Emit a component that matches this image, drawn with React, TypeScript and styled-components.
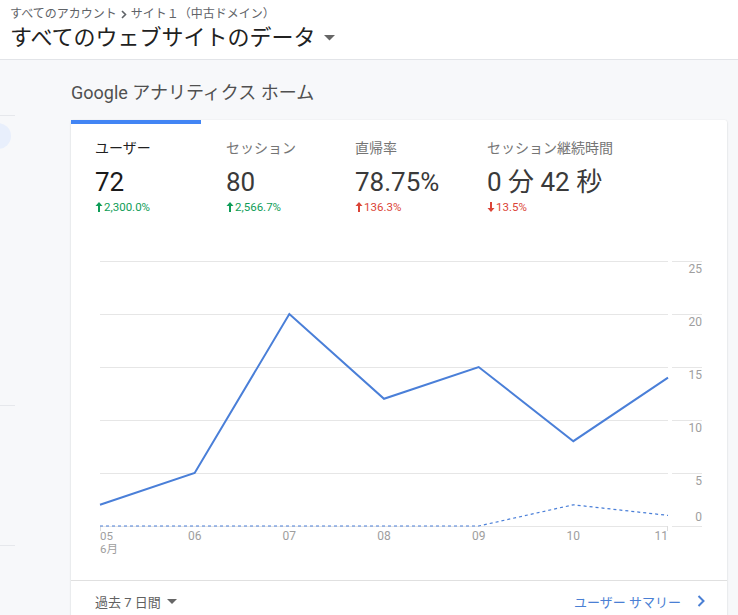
import styled, { createGlobalStyle } from 'styled-components'

const GlobalStyle = createGlobalStyle`
  html, body {
    margin: 0;
    padding: 0;
    height: 100%;
    overflow: hidden;
    background: #f7f8fa;
  }
  body {
    font-family: Roboto, "Noto Sans CJK JP", sans-serif;
  }
`

const Page = styled.div`
  width: 738px;
  height: 615px;
  display: flex;
  flex-direction: column;
  overflow: hidden;
`

const Header = styled.header`
  height: 60px;
  background: #fff;
  border-bottom: 1px solid #e2e4e8;
  padding: 6px 0 0 10px;
  box-sizing: border-box;
  flex-shrink: 0;
`

const Crumbs = styled.div`
  display: flex;
  align-items: center;
  gap: 4px;
  font-size: 12px;
  line-height: 16px;
  color: #5f6368;
`

const Title = styled.h1`
  display: flex;
  align-items: center;
  gap: 8px;
  margin: 0;
  font-size: 22px;
  line-height: 32px;
  font-weight: 400;
  color: #212121;
`

const Body = styled.div`
  flex: 1;
  display: flex;
  min-height: 0;
`

const Rail = styled.div`
  width: 15px;
  flex-shrink: 0;
  display: flex;
  flex-direction: column;
  overflow: hidden;
`

const RailRule = styled.div<{ $top: number }>`
  height: 1px;
  background: #e6e8ec;
  margin-top: ${(p) => p.$top}px;
  flex-shrink: 0;
`

const RailDot = styled.div`
  width: 26px;
  height: 26px;
  border-radius: 50%;
  background: #e8effc;
  margin: 7px 0 0 -15px;
  flex-shrink: 0;
`

const Main = styled.main`
  flex: 1;
  padding: 21px 11px 0 56px;
`

const Heading = styled.h2`
  margin: 0 0 15px;
  font-size: 18px;
  line-height: 24px;
  font-weight: 400;
  color: #505050;
`

const Card = styled.section`
  background: #fff;
  border-radius: 2px;
  box-shadow: 0 1px 2px rgba(60, 64, 67, 0.18), 0 0 1px rgba(60, 64, 67, 0.12);
`

const TabBar = styled.div`
  width: 130px;
  height: 4px;
  background: #4285f4;
`

const Metrics = styled.div`
  display: grid;
  grid-template-columns: 131px 129px 132px auto;
  padding: 14px 24px 5px;
`

const Metric = styled.div`
  display: flex;
  flex-direction: column;
`

const Label = styled.div<{ $active?: boolean }>`
  font-size: 14px;
  line-height: 20px;
  color: ${(p) => (p.$active ? '#212121' : '#757575')};
`

const Value = styled.div<{ $active?: boolean }>`
  margin-top: 8px;
  font-size: 26px;
  line-height: 32px;
  color: ${(p) => (p.$active ? '#1a1a1a' : '#3a3a3a')};
`

const Change = styled.div<{ $good: boolean }>`
  margin-top: 1px;
  font-size: 11.5px;
  line-height: 16px;
  color: ${(p) => (p.$good ? '#0f9d58' : '#db4437')};
  display: flex;
  align-items: center;
  gap: 1px;
`

const ChartSvg = styled.svg`
  display: block;
  font-family: Roboto, "Noto Sans CJK JP", sans-serif;
`

const Footer = styled.div`
  border-top: 1px solid #e0e0e0;
  height: 40px;
  display: flex;
  align-items: center;
  justify-content: space-between;
  padding: 0 22px 0 24px;
  font-size: 13px;
`

const Range = styled.div`
  display: flex;
  align-items: center;
  gap: 6px;
  color: #616161;
`

const ReportLink = styled.a`
  display: flex;
  align-items: center;
  gap: 16px;
  color: #4a7fd4;
  text-decoration: none;
`

const Caret = ({ size = 10, color = '#666' }: { size?: number; color?: string }) => (
  <svg width={size} height={size / 2} viewBox="0 0 10 5">
    <path d="M0 0h10L5 5z" fill={color} />
  </svg>
)

const Arrow = ({ up }: { up: boolean }) => (
  <svg width="8" height="10" viewBox="0 0 8 10">
    {up ? (
      <path d="M4 0L7.5 4H5v6H3V4H.5z" fill="currentColor" />
    ) : (
      <path d="M4 10L7.5 6H5V0H3v6H.5z" fill="currentColor" />
    )}
  </svg>
)

const metrics = [
  { label: 'ユーザー', value: '72', change: '2,300.0%', up: true, good: true, active: true },
  { label: 'セッション', value: '80', change: '2,566.7%', up: true, good: true },
  { label: '直帰率', value: '78.75%', change: '136.3%', up: true, good: false },
  { label: 'セッション継続時間', value: '0 分 42 秒', change: '13.5%', up: false, good: false },
]

const users = [2, 5, 20, 12, 15, 8, 14]
const prev = [0, 0, 0, 0, 0, 2, 1]
const days = ['05', '06', '07', '08', '09', '10', '11']

const X0 = 29
const X1 = 597
const Y0 = 306
const UNIT = 10.6

const px = (i: number) => X0 + ((X1 - X0) / 6) * i
const py = (v: number) => Y0 - v * UNIT

const Chart = () => {
  const grid = [0, 5, 10, 15, 20, 25]
  const line = (d: number[]) => d.map((v, i) => `${px(i)},${py(v)}`).join(' ')
  return (
    <ChartSvg width="656" height="360" viewBox="0 0 656 360">
      {grid.map((g) => (
        <g key={g}>
          <line x1={X0} x2={X1} y1={py(g) + 0.5} y2={py(g) + 0.5} stroke="#e6e6e6" />
          <line x1={601} x2={631} y1={py(g) + 0.5} y2={py(g) + 0.5} stroke="#e6e6e6" />
          <text
            x={631}
            y={g === 0 ? py(g) - 5 : py(g) + 12}
            textAnchor="end"
            fontSize="12"
            fill="#9e9e9e"
          >
            {g}
          </text>
        </g>
      ))}
      <line x1={X0 + 0.5} x2={X0 + 0.5} y1={Y0} y2={Y0 + 5} stroke="#ddd" />
      <line x1={X1 - 0.5} x2={X1 - 0.5} y1={Y0} y2={Y0 + 5} stroke="#ddd" />
      <text fontSize="11.5" fill="#9e9e9e">
        <tspan x={X0} y={320}>
          05
        </tspan>
        <tspan x={X0} dy={13}>
          6月
        </tspan>
      </text>
      {days.slice(1).map((d, i) => (
        <text
          key={d}
          x={px(i + 1)}
          y={320}
          textAnchor={i + 1 === 6 ? 'end' : 'middle'}
          fontSize="12"
          fill="#9e9e9e"
        >
          {d}
        </text>
      ))}
      <polyline
        points={line(prev)}
        fill="none"
        stroke="#4a7fd8"
        strokeWidth="1.2"
        strokeDasharray="3 3"
      />
      <polyline points={line(users)} fill="none" stroke="#4a7fd8" strokeWidth="2" />
    </ChartSvg>
  )
}

const App = () => (
  <Page>
    <GlobalStyle />
    <Header>
      <Crumbs>
        <span>すべてのアカウント</span>
        <svg width="6" height="9" viewBox="0 0 6 9">
          <path d="M1 1l3.5 3.5L1 8" stroke="#5f6368" strokeWidth="1.6" fill="none" />
        </svg>
        <span>サイト１（中古ドメイン）</span>
      </Crumbs>
      <Title>
        すべてのウェブサイトのデータ
        <Caret size={11} />
      </Title>
    </Header>
    <Body>
      <Rail>
        <RailRule $top={55} />
        <RailDot />
        <RailRule $top={256} />
        <RailRule $top={139} />
      </Rail>
      <Main>
        <Heading>Google アナリティクス ホーム</Heading>
        <Card>
          <TabBar />
          <Metrics>
            {metrics.map((m) => (
              <Metric key={m.label}>
                <Label $active={m.active}>{m.label}</Label>
                <Value $active={m.active}>{m.value}</Value>
                <Change $good={m.good}>
                  <Arrow up={m.up} />
                  {m.change}
                </Change>
              </Metric>
            ))}
          </Metrics>
          <Chart />
          <Footer>
            <Range>
              過去 7 日間
              <Caret size={10} />
            </Range>
            <ReportLink href="#">
              ユーザー サマリー
              <svg width="8" height="12" viewBox="0 0 8 12">
                <path d="M1.5 1l5 5-5 5" stroke="#4a7fd4" strokeWidth="2" fill="none" />
              </svg>
            </ReportLink>
          </Footer>
        </Card>
      </Main>
    </Body>
  </Page>
)

export default App
